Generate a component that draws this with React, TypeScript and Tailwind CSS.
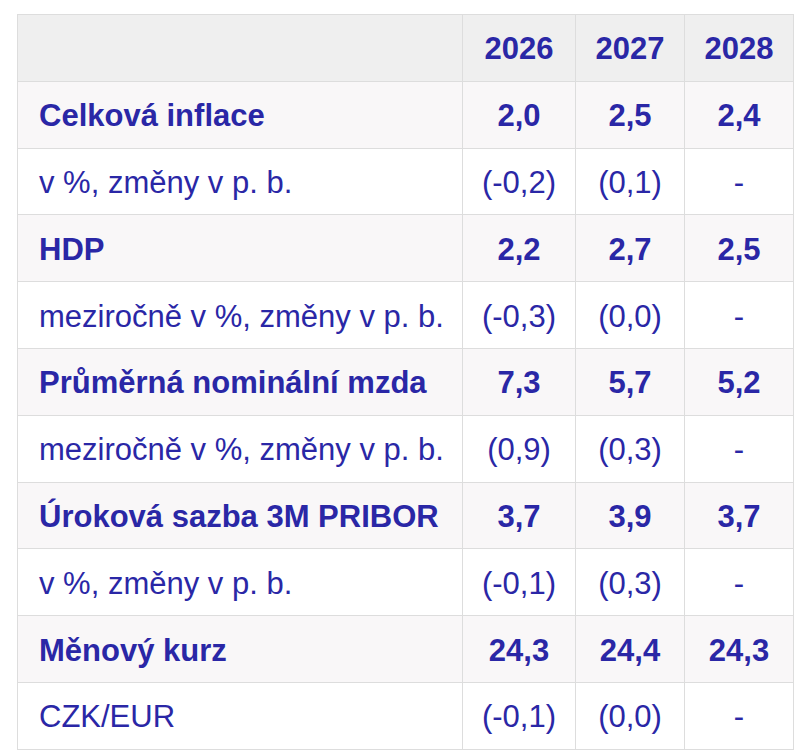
const rows: { label: string; values: string[]; bold: boolean }[] = [
  { label: 'Celková inflace', values: ['2,0', '2,5', '2,4'], bold: true },
  { label: 'v %, změny v p. b.', values: ['(-0,2)', '(0,1)', '-'], bold: false },
  { label: 'HDP', values: ['2,2', '2,7', '2,5'], bold: true },
  { label: 'meziročně v %, změny v p. b.', values: ['(-0,3)', '(0,0)', '-'], bold: false },
  { label: 'Průměrná nominální mzda', values: ['7,3', '5,7', '5,2'], bold: true },
  { label: 'meziročně v %, změny v p. b.', values: ['(0,9)', '(0,3)', '-'], bold: false },
  { label: 'Úroková sazba 3M PRIBOR', values: ['3,7', '3,9', '3,7'], bold: true },
  { label: 'v %, změny v p. b.', values: ['(-0,1)', '(0,3)', '-'], bold: false },
  { label: 'Měnový kurz', values: ['24,3', '24,4', '24,3'], bold: true },
  { label: 'CZK/EUR', values: ['(-0,1)', '(0,0)', '-'], bold: false },
]

const years = ['2026', '2027', '2028']

export default function App() {
  return (
    <div className="min-h-screen bg-white pt-[14px] pl-[17px] font-['Liberation_Sans',Arial,sans-serif] text-[#2a27a6]">
      <table className="border-collapse text-[31px] leading-none">
        <colgroup>
          <col className="w-[445px]" />
          <col className="w-[113px]" />
          <col className="w-[109px]" />
          <col className="w-[109px]" />
        </colgroup>
        <thead>
          <tr className="bg-[#efefef]">
            <th className="h-[66.8px] border border-[#dddddd]" />
            {years.map((y) => (
              <th key={y} className="h-[66.8px] border border-[#dddddd] pt-[2px] text-center font-bold">
                {y}
              </th>
            ))}
          </tr>
        </thead>
        <tbody>
          {rows.map((row, i) => (
            <tr key={i} className={row.bold ? 'bg-[#f9f7f8] font-bold' : 'bg-white'}>
              <td className="h-[66.8px] border border-[#dddddd] pt-[2px] pl-[21px] text-left whitespace-nowrap">
                {row.label}
              </td>
              {row.values.map((v, j) => (
                <td key={j} className="h-[66.8px] border border-[#dddddd] pt-[2px] text-center">
                  {v}
                </td>
              ))}
            </tr>
          ))}
        </tbody>
      </table>
    </div>
  )
}
